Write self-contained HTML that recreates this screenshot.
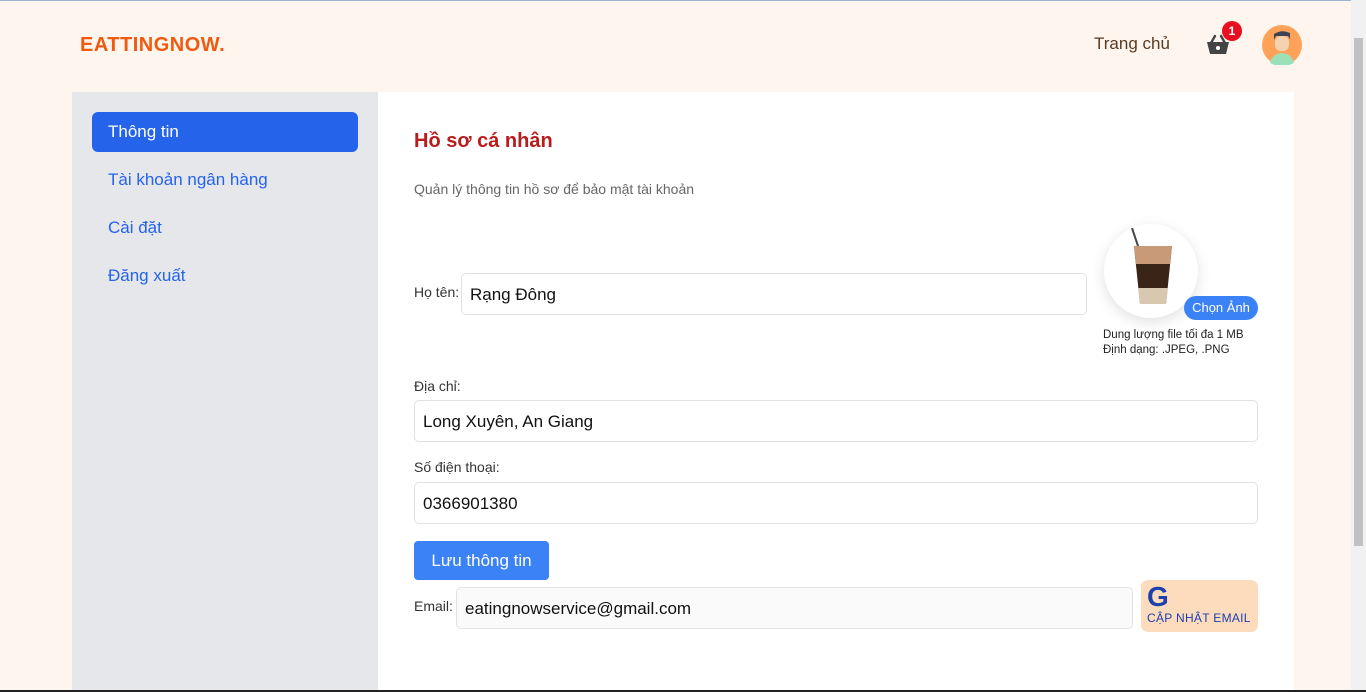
<!DOCTYPE html>
<html><head><meta charset="utf-8"><style>
*{box-sizing:border-box;margin:0;padding:0}
body{width:1366px;height:692px;overflow:hidden;background:#fef6ee;font-family:"Liberation Sans",sans-serif;position:relative}
.abs{position:absolute}
.logo{left:80px;top:34px;font-weight:bold;font-size:20px;color:#ef5a0f;letter-spacing:.5px}
.nav{left:1094px;top:34px;font-size:17px;color:#5a3a22}
.side{left:72px;top:92px;width:306px;height:600px;background:#e5e7eb}
.main{left:378px;top:92px;width:916px;height:600px;background:#fff}
.item{position:absolute;left:20px;width:266px;height:40px;border-radius:6px;font-size:17px;color:#2563eb;padding:10px 16px}
.item.act{background:#2563eb;color:#fff}
.inp{position:absolute;border:1px solid #e2e2e2;border-radius:5px;height:42px;font-size:17px;color:#111;padding:11px 8px;background:#fff}
.lab{position:absolute;font-size:14px;color:#333}
.scroll{left:1351px;top:0;width:15px;height:692px;background:#f1f1f1}
</style></head><body>
<div class="abs" style="left:0;top:0;width:1366px;height:1px;background:#9ab4d4"></div>
<div class="abs logo">EATTINGNOW.</div>
<div class="abs nav">Trang chủ</div>
<svg class="abs" style="left:1206px;top:34px" width="24" height="22" viewBox="0 0 24 22"><path d="M5 9 L9 2 M19 9 L15 2" stroke="#444" stroke-width="2.4" fill="none" stroke-linecap="round"/><path d="M1 8 H23 L20 20 H4 Z" fill="#444"/><circle cx="12" cy="14" r="2" fill="#fff"/></svg>
<div class="abs" style="left:1222px;top:21px;width:20px;height:20px;border-radius:50%;background:#e8101f;color:#fff;font-size:12px;font-weight:bold;text-align:center;line-height:20px">1</div>
<svg class="abs" style="left:1262px;top:25px" width="40" height="40" viewBox="0 0 40 40"><circle cx="20" cy="20" r="20" fill="#fea25a"/><path d="M8 38 Q10 29 20 28 Q30 29 32 38 Q26 41 20 41 Q13 41 8 38Z" fill="#9be0b8"/><rect x="13" y="11" width="14" height="15" rx="6" fill="#f6d3b0"/><path d="M12 15 V9 Q20 4 28 8 V14 L26 11 H14Z" fill="#3d4453"/></svg>
<div class="abs scroll"><div style="position:absolute;left:3px;top:38px;width:9px;height:508px;background:#c1c1c1"></div></div>
<div class="abs side">
<div class="item act" style="top:20px">Thông tin</div>
<div class="item" style="top:68px">Tài khoản ngân hàng</div>
<div class="item" style="top:116px">Cài đặt</div>
<div class="item" style="top:164px">Đăng xuất</div>
</div>
<div class="abs main">
<div class="abs" style="left:36px;top:38px;font-size:20px;font-weight:bold;color:#b91c1c">Hồ sơ cá nhân</div>
<div class="abs" style="left:36px;top:89px;font-size:14px;color:#666">Quản lý thông tin hồ sơ để bảo mật tài khoản</div>
<div class="lab" style="left:36px;top:192px">Họ tên:</div>
<div class="inp" style="left:83px;top:181px;width:626px">Rạng Đông</div>
<div class="abs" style="left:726px;top:132px;width:94px;height:94px;border-radius:50%;background:#fff;box-shadow:0 4px 14px rgba(0,0,0,.12)"></div>
<svg class="abs" style="left:750px;top:136px" width="50" height="80" viewBox="0 0 50 80"><path d="M4 0 L14 30" stroke="#444" stroke-width="2"/><path d="M6 18 H44 L38 76 H12Z" fill="#3a2418"/><path d="M6 18 H44 L42 36 H8Z" fill="#c89a78"/><path d="M10 60 H40 L38 76 H12Z" fill="#d8c8b0"/></svg>
<div class="abs" style="left:806px;top:204px;width:74px;height:24px;border-radius:12px;background:#3b82f6;color:#fff;font-size:13px;text-align:center;line-height:24px">Chọn Ảnh</div>
<div class="abs" style="left:725px;top:236px;font-size:11.5px;color:#222;line-height:15px">Dung lượng file tối đa 1 MB<br>Định dạng: .JPEG, .PNG</div>
<div class="lab" style="left:36px;top:286px">Địa chỉ:</div>
<div class="inp" style="left:36px;top:308px;width:844px">Long Xuyên, An Giang</div>
<div class="lab" style="left:36px;top:367px">Số điện thoại:</div>
<div class="inp" style="left:36px;top:390px;width:844px">0366901380</div>
<div class="abs" style="left:36px;top:449px;width:135px;height:39px;border-radius:4px;background:#3b82f6;color:#fff;font-size:17px;text-align:center;line-height:39px">Lưu thông tin</div>
<div class="lab" style="left:36px;top:506px">Email:</div>
<div class="inp" style="left:78px;top:495px;width:677px;background:#fafafa">eatingnowservice@gmail.com</div>
<div class="abs" style="left:763px;top:488px;width:117px;height:52px;border-radius:7px;background:#fcdcbc">
<div class="abs" style="left:6px;top:2px;font-size:28px;font-weight:bold;color:#1e40af;line-height:30px">G</div>
<div class="abs" style="left:6px;top:31px;font-size:12px;color:#1e40af;letter-spacing:.3px">CẬP NHẬT EMAIL</div>
</div>
</div>
<div class="abs" style="left:0;top:690px;width:1366px;height:2px;background:#222"></div>
</body></html>
